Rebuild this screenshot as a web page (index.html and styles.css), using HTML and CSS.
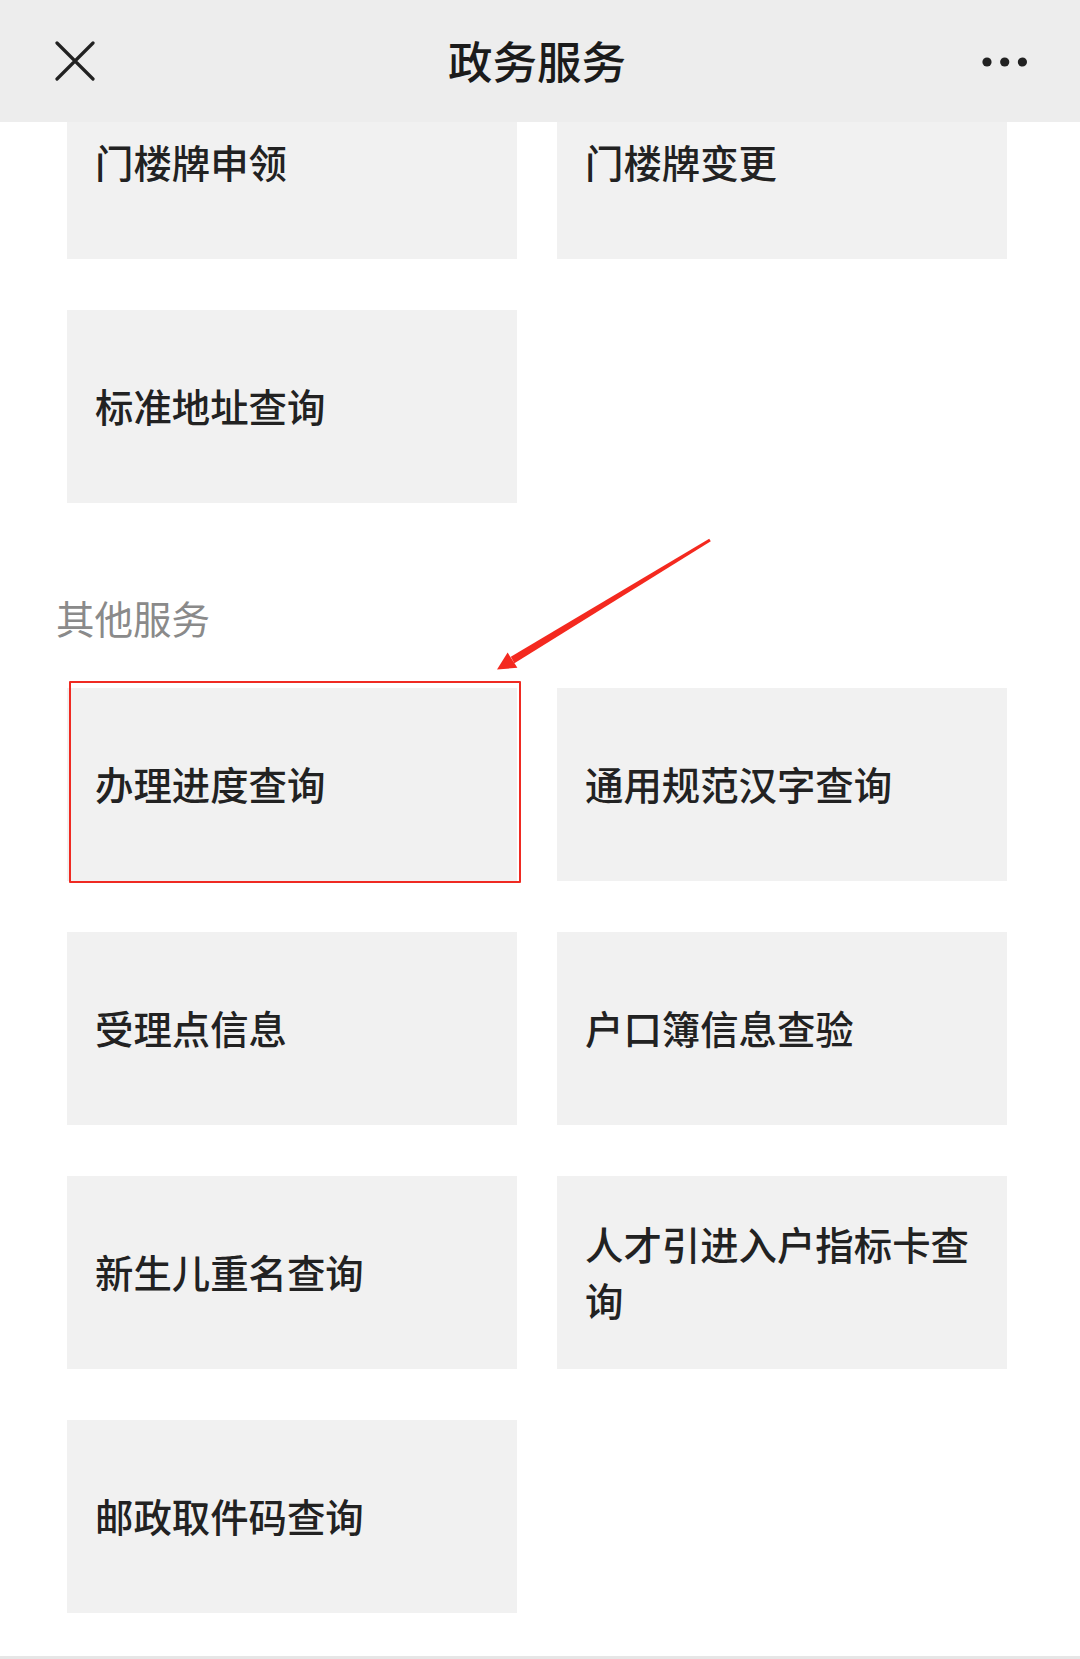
FILE: index.html
```html
<!DOCTYPE html>
<html lang="zh-CN">
<head>
<meta charset="utf-8">
<title>政务服务</title>
<link rel="stylesheet" href="styles.css">
</head>
<body>
<header class="topbar">
  <svg class="close" viewBox="0 0 40 40" width="40" height="40" aria-hidden="true">
    <path d="M2 2 L38 38 M38 2 L2 38" stroke="#222" stroke-width="3.2" stroke-linecap="round" fill="none"/>
  </svg>
  <h1 class="title">政务服务</h1>
  <svg class="more" viewBox="0 0 46 10" width="46" height="10" aria-hidden="true">
    <circle cx="5" cy="5" r="4.6" fill="#222"/>
    <circle cx="22.7" cy="5" r="4.6" fill="#222"/>
    <circle cx="40.4" cy="5" r="4.6" fill="#222"/>
  </svg>
</header>

<main class="page">
  <div class="grid">
    <div class="card"><span>门楼牌申领</span></div>
    <div class="card"><span>门楼牌变更</span></div>
    <div class="card"><span>标准地址查询</span></div>
  </div>

  <h2 class="section-title">其他服务</h2>

  <div class="grid">
    <div class="card card-marked"><span>办理进度查询</span><div class="mark"></div></div>
    <div class="card"><span>通用规范汉字查询</span></div>
    <div class="card"><span>受理点信息</span></div>
    <div class="card"><span>户口簿信息查验</span></div>
    <div class="card"><span>新生儿重名查询</span></div>
    <div class="card"><span>人才引进入户指标卡查询</span></div>
    <div class="card"><span>邮政取件码查询</span></div>
  </div>
</main>

<div class="bottom-line"></div>

<svg class="arrow" viewBox="0 0 1080 1659" width="1080" height="1659" aria-hidden="true">
  <polygon points="710.8,541.2 709.2,538.8 510.8,656.8 514.4,663.2" fill="#f4291f"/>
  <polygon points="497,669.5 507.6,652.6 517.4,667.8" fill="#f4291f"/>
</svg>
</body>
</html>
```

FILE: styles.css
```css
html, body {
  margin: 0;
  padding: 0;
  background: #ffffff;
}

body {
  width: 1080px;
  height: 1659px;
  overflow: hidden;
  position: relative;
  font-family: "Noto Sans CJK SC", "Noto Sans", sans-serif;
  color: #222222;
}

.topbar {
  position: fixed;
  top: 0;
  left: 0;
  width: 1080px;
  height: 122px;
  background: #ededed;
  z-index: 10;
  display: flex;
  align-items: center;
  justify-content: center;
}

.close {
  position: absolute;
  left: 55px;
  top: 41px;
}

.more {
  position: absolute;
  left: 982px;
  top: 57px;
}

.title {
  margin: 0;
  font-size: 44.5px;
  font-weight: 500;
  line-height: 60px;
  color: #1b1b1b;
  transform: translate(-3px, -1px);
}

.page {
  padding: 66px 0 0 56px;
}

.grid {
  display: grid;
  grid-template-columns: 450px 450px;
  column-gap: 40px;
  row-gap: 51px;
  padding-left: 11px;
}

.card {
  position: relative;
  height: 193px;
  background: #f1f1f1;
  display: flex;
  align-items: center;
  padding: 0 28px;
  box-sizing: border-box;
  font-size: 38.4px;
  font-weight: 500;
  line-height: 56px;
  color: #222222;
}

.card span {
  display: block;
  transform: translateY(-2px);
}

.section-title {
  margin: 89px 0 46px 0;
  font-size: 38.5px;
  font-weight: 400;
  line-height: 50px;
  color: #8a8a8a;
}

.mark {
  position: absolute;
  left: 2px;
  top: -7px;
  width: 452px;
  height: 202px;
  box-sizing: border-box;
  border: 2.5px solid #ef2a22;
  border-radius: 1px;
}

.bottom-line {
  position: absolute;
  left: 0;
  bottom: 0;
  width: 1080px;
  height: 3px;
  background: #e6e6e6;
}

.arrow {
  position: absolute;
  left: 0;
  top: 0;
  pointer-events: none;
  z-index: 5;
}
```
